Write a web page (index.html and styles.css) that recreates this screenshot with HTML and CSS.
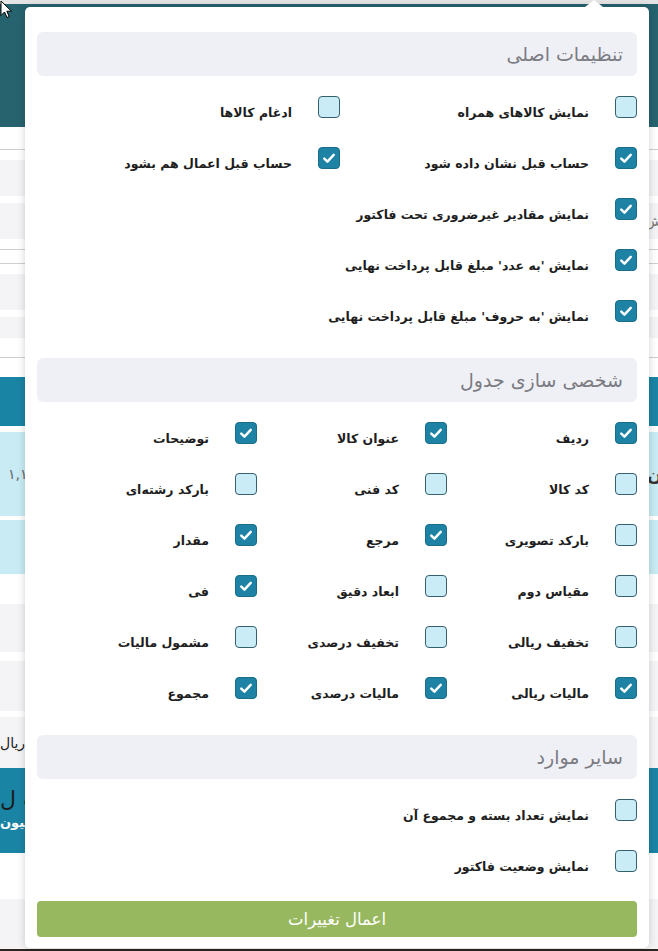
FILE: index.html
```html
<!DOCTYPE html>
<html lang="fa">
<head>
  <meta charset="UTF-8" />
  <meta name="viewport" content="width=device-width, initial-scale=1" />
  <title>تنظیمات فاکتور</title>
  <link rel="stylesheet" href="styles.css">
</head>
<body>
  <div class="page">
    <div class="topline"></div>
    <div class="hero"></div>
    <div class="toolbar"></div>
    <div class="space s10"></div>
    <div class="stripe h36"></div>
    <div class="space s7"></div>
    <div class="stripe h36"><span class="edge-right">ش</span></div>
    <div class="space s10 line"></div>
    <div class="space s13 line"></div>
    <div class="space s10"></div>
    <div class="stripe h36"></div>
    <div class="space s7"></div>
    <div class="stripe h21"></div>
    <div class="space s19 line"></div>
    <div class="space s19"></div>
    <div class="thead"></div>
    <div class="space s6"></div>
    <div class="trow h84"><span class="edge-left num">۱,۱۰۰,۰۰۰</span><span class="edge-right bold">ن</span></div>
    <div class="space s4"></div>
    <div class="trow h54"></div>
    <div class="space s30"></div>
    <div class="stripe h48"></div>
    <div class="space s9"></div>
    <div class="stripe h50"></div>
    <div class="space s6"></div>
    <div class="stripe h51"><span class="edge-left">۲۵۰,۰۰۰ ریال</span></div>
    <div class="total">
      <div class="total-big">قابل پ ل</div>
      <div class="total-small">دو میلیون</div>
    </div>
    <div class="space s46"></div>
    <div class="stripe h50"></div>
    <div class="footer"></div>
  </div>

  <svg class="cursor" width="13" height="19" viewBox="0 0 13 19">
    <path d="M1 1 L1 15.5 L4.5 12 L7 17.5 L9.2 16.5 L6.8 11.2 L11.5 11.2 Z" fill="#fff" stroke="#000" stroke-width="1" stroke-linejoin="round"/>
  </svg>

  <div class="menu">
    <div class="menu-section">
      <div class="menu-title">تنظیمات اصلی</div>
      <div class="opts">
        <label class="opt"><span class="box"></span><span class="opt-text">نمایش کالاهای همراه</span></label>
        <label class="opt"><span class="box"></span><span class="opt-text">ادغام کالاها</span></label>
        <label class="opt"><span class="box on"><svg viewBox="0 0 22 22"><path d="M5.8 11.6 L9.3 15 L16.2 7.6"/></svg></span><span class="opt-text">حساب قبل نشان داده شود</span></label>
        <label class="opt"><span class="box on"><svg viewBox="0 0 22 22"><path d="M5.8 11.6 L9.3 15 L16.2 7.6"/></svg></span><span class="opt-text">حساب قبل اعمال هم بشود</span></label>
        <label class="opt wide"><span class="box on"><svg viewBox="0 0 22 22"><path d="M5.8 11.6 L9.3 15 L16.2 7.6"/></svg></span><span class="opt-text">نمایش مقادیر غیرضروری تحت فاکتور</span></label>
        <label class="opt wide"><span class="box on"><svg viewBox="0 0 22 22"><path d="M5.8 11.6 L9.3 15 L16.2 7.6"/></svg></span><span class="opt-text">نمایش 'به عدد' مبلغ قابل پرداخت نهایی</span></label>
        <label class="opt wide"><span class="box on"><svg viewBox="0 0 22 22"><path d="M5.8 11.6 L9.3 15 L16.2 7.6"/></svg></span><span class="opt-text">نمایش 'به حروف' مبلغ قابل پرداخت نهایی</span></label>
      </div>
    </div>

    <div class="menu-section">
      <div class="menu-title">شخصی سازی جدول</div>
      <div class="opts three">
        <label class="opt"><span class="box on"><svg viewBox="0 0 22 22"><path d="M5.8 11.6 L9.3 15 L16.2 7.6"/></svg></span><span class="opt-text">ردیف</span></label>
        <label class="opt"><span class="box on"><svg viewBox="0 0 22 22"><path d="M5.8 11.6 L9.3 15 L16.2 7.6"/></svg></span><span class="opt-text">عنوان کالا</span></label>
        <label class="opt"><span class="box on"><svg viewBox="0 0 22 22"><path d="M5.8 11.6 L9.3 15 L16.2 7.6"/></svg></span><span class="opt-text">توضیحات</span></label>

        <label class="opt"><span class="box"></span><span class="opt-text">کد کالا</span></label>
        <label class="opt"><span class="box"></span><span class="opt-text">کد فنی</span></label>
        <label class="opt"><span class="box"></span><span class="opt-text">بارکد رشته‌ای</span></label>

        <label class="opt"><span class="box"></span><span class="opt-text">بارکد تصویری</span></label>
        <label class="opt"><span class="box on"><svg viewBox="0 0 22 22"><path d="M5.8 11.6 L9.3 15 L16.2 7.6"/></svg></span><span class="opt-text">مرجع</span></label>
        <label class="opt"><span class="box on"><svg viewBox="0 0 22 22"><path d="M5.8 11.6 L9.3 15 L16.2 7.6"/></svg></span><span class="opt-text">مقدار</span></label>

        <label class="opt"><span class="box"></span><span class="opt-text">مقیاس دوم</span></label>
        <label class="opt"><span class="box"></span><span class="opt-text">ابعاد دقیق</span></label>
        <label class="opt"><span class="box on"><svg viewBox="0 0 22 22"><path d="M5.8 11.6 L9.3 15 L16.2 7.6"/></svg></span><span class="opt-text">فی</span></label>

        <label class="opt"><span class="box"></span><span class="opt-text">تخفیف ریالی</span></label>
        <label class="opt"><span class="box"></span><span class="opt-text">تخفیف درصدی</span></label>
        <label class="opt"><span class="box"></span><span class="opt-text">مشمول مالیات</span></label>

        <label class="opt"><span class="box on"><svg viewBox="0 0 22 22"><path d="M5.8 11.6 L9.3 15 L16.2 7.6"/></svg></span><span class="opt-text">مالیات ریالی</span></label>
        <label class="opt"><span class="box on"><svg viewBox="0 0 22 22"><path d="M5.8 11.6 L9.3 15 L16.2 7.6"/></svg></span><span class="opt-text">مالیات درصدی</span></label>
        <label class="opt"><span class="box on"><svg viewBox="0 0 22 22"><path d="M5.8 11.6 L9.3 15 L16.2 7.6"/></svg></span><span class="opt-text">مجموع</span></label>
      </div>
    </div>

    <div class="menu-section">
      <div class="menu-title">سایر موارد</div>
      <div class="opts">
        <label class="opt wide"><span class="box"></span><span class="opt-text">نمایش تعداد بسته و مجموع آن</span></label>
        <label class="opt wide"><span class="box"></span><span class="opt-text">نمایش وضعیت فاکتور</span></label>
      </div>
    </div>

    <button class="apply">اعمال تغییرات</button>
  </div>
</body>
</html>
```

FILE: styles.css
```css
body {
  margin: 0;
  font-family: "DejaVu Sans", sans-serif;
  background: #fff;
  overflow: hidden;
}
.page {
  direction: rtl;
  height: 951px;
  overflow: hidden;
}
.topline {
  height: 4px;
  background: #e4e4e4;
}
.hero {
  height: 123px;
  background: #26636f;
}
.toolbar {
  height: 22px;
  border-bottom: 1px solid #cfcfcf;
}
.space.s4 { height: 4px; }
.space.s6 { height: 6px; }
.space.s7 { height: 7px; }
.space.s9 { height: 9px; }
.space.s10 { height: 10px; }
.space.s13 { height: 13px; }
.space.s19 { height: 19px; }
.space.s30 { height: 30px; }
.space.s46 { height: 46px; }
.space.line {
  border-bottom: 1px solid #cfcfcf;
}
.stripe {
  background: #f4f4f6;
  position: relative;
}
.h21 { height: 21px; }
.h36 { height: 36px; }
.h48 { height: 48px; }
.h50 { height: 50px; }
.h51 { height: 51px; }
.h54 { height: 54px; }
.h84 { height: 84px; }
.thead {
  height: 49px;
  background: #1a84a5;
}
.trow {
  background: #c8ebf4;
  position: relative;
}
.edge-left {
  position: absolute;
  left: 0;
  top: 50%;
  transform: translateY(-50%);
  font-size: 14px;
  color: #222;
  white-space: nowrap;
}
.edge-left.num {
  left: 8px;
  color: #666;
  direction: ltr;
}
.edge-right {
  position: absolute;
  right: -4px;
  top: 50%;
  transform: translateY(-50%);
  font-size: 14px;
  color: #777;
}
.edge-right.bold {
  font-weight: bold;
  font-size: 18px;
  color: #333;
}
.total {
  height: 85px;
  background: #1a84a5;
  padding: 18px 0 0;
  box-sizing: border-box;
  text-align: left;
}
.total-big {
  font-size: 22px;
  color: #1c1c1c;
  line-height: 28px;
  white-space: nowrap;
}
.total-small {
  font-size: 13px;
  color: #fff;
  font-weight: bold;
  line-height: 18px;
  white-space: nowrap;
}
.footer {
  height: 3px;
  background: #2b2421;
}
.cursor {
  position: absolute;
  top: 0;
  left: 0;
  z-index: 5;
}

.menu {
  position: absolute;
  top: 7px;
  left: 25px;
  width: 624px;
  height: 941px;
  box-sizing: border-box;
  padding: 25px 12px 12px;
  background: #fff;
  border-radius: 5px;
  box-shadow: 0 0 8px rgba(0, 0, 0, 0.18);
  direction: rtl;
}
.menu::before {
  content: "";
  position: absolute;
  top: -7px;
  right: 46px;
  border-left: 9px solid transparent;
  border-right: 9px solid transparent;
  border-bottom: 7px solid #fff;
}
.menu-section + .menu-section {
  margin-top: 7px;
}
.menu-title {
  height: 44px;
  line-height: 44px;
  padding: 0 14px;
  margin-bottom: 20px;
  background: #eff0f5;
  border-radius: 6px;
  font-size: 19px;
  color: #7b7b83;
}
.opts {
  display: grid;
  grid-template-columns: 297px 1fr;
  grid-auto-rows: 51px;
}
.opts.three {
  grid-template-columns: 190px 190px 1fr;
}
.opt {
  display: flex;
  align-items: flex-start;
  gap: 26px;
  cursor: pointer;
}
.opt.wide {
  grid-column: 1 / -1;
}
.box {
  flex: none;
  width: 22px;
  height: 22px;
  box-sizing: border-box;
  border: 1px solid #35606e;
  border-radius: 4px;
  background: #c9ecf6;
}
.box.on {
  background: #1d82a4;
  border-color: #1b6e89;
}
.box svg {
  display: block;
  width: 20px;
  height: 20px;
}
.box svg path {
  fill: none;
  stroke: #fff;
  stroke-width: 2.7;
  stroke-linecap: round;
  stroke-linejoin: round;
}
.opt-text {
  margin-top: 9px;
  font-size: 12.5px;
  line-height: 16px;
  font-weight: bold;
  color: #1e1e1e;
  white-space: nowrap;
}
.apply {
  display: block;
  width: 100%;
  height: 36px;
  border: none;
  border-radius: 4px;
  background: #97b85f;
  color: #fff;
  font-family: "DejaVu Sans", sans-serif;
  font-size: 16.5px;
  cursor: pointer;
}
```
